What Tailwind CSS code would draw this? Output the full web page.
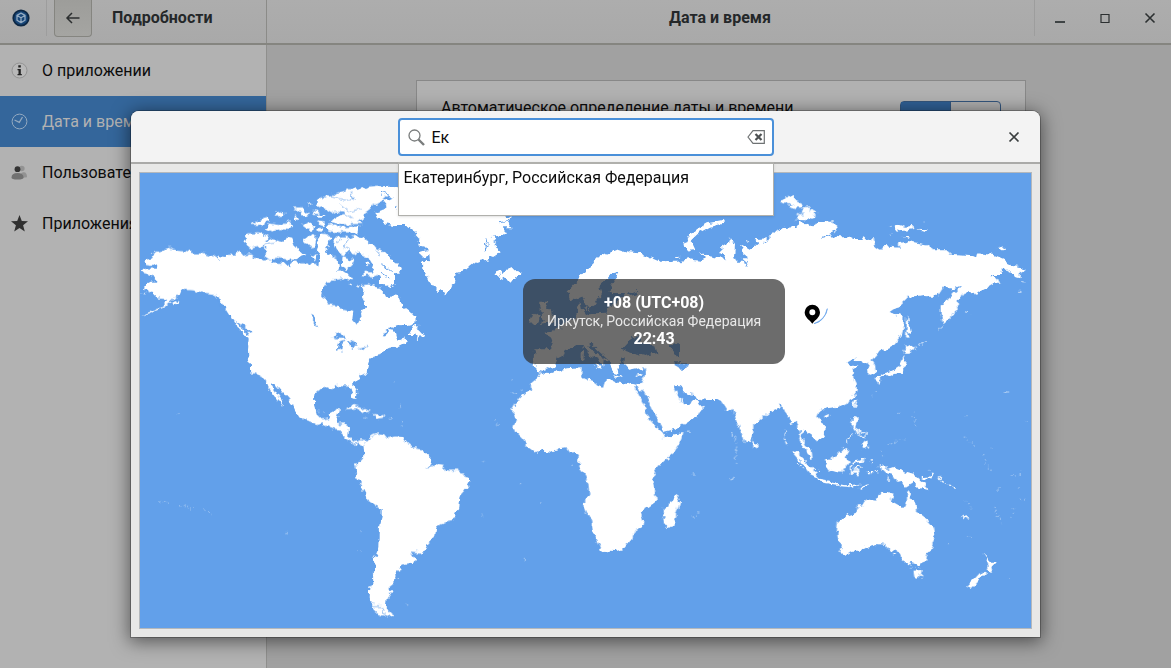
<!DOCTYPE html>
<html lang="ru">
<head>
  <meta charset="UTF-8" />
  <meta name="viewport" content="width=device-width, initial-scale=1.0" />
  <title>Дата и время</title>
  <script src="https://cdn.jsdelivr.net/npm/@tailwindcss/browser@4"></script>
</head>
<body class="bg-[#a1a1a1] font-[Roboto,sans-serif] text-base text-[#0c0c0c]">
  <div class="flex flex-col h-screen overflow-hidden">
    <!-- Title bar -->
    <header class="flex h-[45px] shrink-0 border-b-2 border-[#858580] bg-linear-to-b from-[#adadad] to-[#a9a9a9] text-[#242729]">
      <div class="flex w-[267px] h-full shrink-0 border-r border-[#8b8b88]">
        <div class="flex w-[47px] h-9 items-center pl-3 border-r border-[#9d9d9d]">
          <svg class="w-[18px] h-[18px]" viewBox="0 0 18 18" fill="none">
            <circle cx="9" cy="9" r="8.6" fill="#0d2744" />
            <circle cx="9" cy="9" r="6.8" fill="#174577" />
            <path d="M9 4.2 13 6.3v5L9 13.6 5 11.3v-5zM5 6.5l4 2.2 4-2.2M9 8.7v4.7" stroke="#94abc2" stroke-width="1.3" stroke-linejoin="round" />
          </svg>
        </div>
        <button aria-label="Назад" class="ml-[7px] flex w-[38px] h-[37px] items-center justify-center rounded-b border border-t-0 border-[#858580] bg-linear-to-b from-[#9d9d9a] to-[#a5a5a2]">
          <svg class="w-4 h-4" viewBox="0 0 16 16" fill="none" stroke="#2c2f30" stroke-width="1.5"><path d="M14.500 8H2.500M7 3 2 8l5 5" /></svg>
        </button>
        <h2 class="flex h-9 items-center pl-5 font-bold">Подробности</h2>
      </div>
      <h1 class="flex flex-1 h-9 items-center justify-center pl-[139px] font-bold">Дата и время</h1>
      <div class="flex w-[137px] h-9 shrink-0 items-center gap-[25px] border-l border-[#9d9d9d] pl-[15px]">
        <button aria-label="Свернуть" class="flex size-5 items-center justify-center"><svg class="w-3 h-3" viewBox="0 0 12 12"><path d="M1 9h10v2H1z" fill="#3f4445" /></svg></button>
        <button aria-label="Развернуть" class="flex size-5 items-center justify-center"><svg class="w-3 h-3" viewBox="0 0 12 12"><path d="M2 2.500h8v8H2z" fill="none" stroke="#2c3031" stroke-width="1.200" /></svg></button>
        <button aria-label="Закрыть" class="flex size-5 items-center justify-center"><svg class="w-3 h-3" viewBox="0 0 12 12"><path d="m1.500 1.500 9 9m0-9-9 9" fill="none" stroke="#2c3031" stroke-width="1.600" /></svg></button>
      </div>
    </header>

    <div class="flex flex-1">
      <!-- Sidebar -->
      <nav class="w-[267px] shrink-0 border-r border-[#8f8f8d] bg-[#b2b2b2]">
        <a href="#" class="flex h-[51px] items-center gap-[14px] pl-[11px]">
          <svg class="w-[17px] h-[17px]" viewBox="0 0 17 17"><circle cx="8.500" cy="8.500" r="7.500" fill="#b8b8b8" stroke="#8a8a8a" stroke-width=".8" /><path d="M7.300 3.300h2.500v2.200H7.300zM6.500 7h3.300v5h1v1.300H6.500V12h1V8.300h-1z" fill="#222" /></svg>
          О приложении
        </a>
        <a href="#" class="flex h-[51px] items-center gap-[14px] bg-[#34669b] pl-[11px] text-[#b2b2b2]">
          <svg class="w-[17px] h-[17px]" viewBox="0 0 17 17" fill="none" stroke="#93a9c0"><circle cx="8.500" cy="8.500" r="7.400" /><path d="M3.500 7 8.300 9.300 11.500 4" stroke-width="1.300" /></svg>
          Дата и время
        </a>
        <a href="#" class="flex h-[51px] items-center gap-[14px] pl-[11px]">
          <svg class="w-[17px] h-[17px]" viewBox="0 0 17 17"><circle cx="10.800" cy="4.500" r="2.800" fill="#929292" /><path d="M9 14c0-5 2-5.800 4-5.800s3 2 3 5z" fill="#929292" /><circle cx="6.500" cy="5.200" r="2.900" fill="#333" /><path d="M.5 13.500c0-3 2-4.500 6-4.500s6 1.500 6 4.500c0 1.500-2 2-6 2s-6-.5-6-2z" fill="#717171" /></svg>
          Пользователи
        </a>
        <a href="#" class="flex h-[51px] items-center gap-[14px] pl-[11px]">
          <svg class="w-[17px] h-[17px]" viewBox="0 0 17 17"><path d="m8.500 0 2.300 6 6.200.3-4.900 3.900 1.700 6.300-5.300-3.600-5.300 3.600 1.700-6.300L0 6.300 6.200 6z" fill="#303030" /></svg>
          Приложения
        </a>
      </nav>

      <!-- Page behind the dialog -->
      <main class="flex-1 pl-1 pt-[35px]">
        <div class="mx-auto flex max-w-[610px] h-40 items-start justify-between border border-[#888] bg-[#b1b1b1] px-6 pt-[15px]">
          <label for="auto-time">Автоматическое определение даты и времени</label>
          <div class="relative mt-[5px] flex w-[101px] h-[34px] rounded border border-[#33557d] bg-[#adadad]">
            <input id="auto-time" type="checkbox" checked class="absolute inset-0 appearance-none" />
            <span class="w-1/2 border-r border-[#33557d] bg-[#2f5f94]"></span>
          </div>
        </div>
      </main>
    </div>
  </div>

  <!-- Time zone dialog -->
  <div class="fixed inset-0 flex px-[131px] pt-[111px] pb-[31px]">
    <div role="dialog" aria-label="Часовой пояс" class="flex flex-1 flex-col rounded-t-lg bg-[#e8e8e7] shadow-[0_0_0_1px_rgba(0,0,0,0.25),0_3px_18px_2px_rgba(0,0,0,0.5)]">
      <div class="grid grid-cols-[1fr_376px_1fr] h-[53px] shrink-0 items-start rounded-t-lg border-b-2 border-[#aaaaa8] bg-[#f3f3f3] pt-[7px]">
        <div class="relative col-start-2">
          <svg class="absolute left-[10px] top-[11px] w-[17px] h-[17px]" viewBox="0 0 17 17" fill="none"><circle cx="6.500" cy="6.500" r="5.500" stroke="#7a7d7d" stroke-width="1.300" /><path d="m10.500 10.500 5.500 5.500" stroke="#7a7d7d" stroke-width="2.400" /></svg>
          <input type="text" aria-label="Поиск города" value="Ек" class="block w-full h-[38px] rounded-[4px] border-2 border-[#4a90d9] bg-white pl-8 pr-9 outline-none" />
          <button aria-label="Очистить" class="absolute right-[9px] top-[11px]">
            <svg class="w-[18px] h-4" viewBox="0 0 18 16" fill="none" stroke="#6e7273"><path d="M1 8 6 1.700h11.300v12.600H6z" stroke-width="1.200" /><path d="m8.500 5 6 6m0-6-6 6" stroke="#4d5152" stroke-width="2.200" /></svg>
          </button>
          <!-- Completion popup -->
          <ul class="absolute left-0 top-[44px] z-10 w-full h-[54px] border border-[#b0b0ac] border-t-2 bg-white px-[5px] shadow-sm">
            <li><a href="#" class="block leading-7">Екатеринбург, Российская Федерация</a></li>
          </ul>
        </div>
        <div class="flex justify-end pr-4 pt-[9px]">
          <button aria-label="Закрыть" class="flex size-5 items-center justify-center"><svg class="w-3 h-3" viewBox="0 0 12 12"><path d="m1.500 1.500 9 9m0-9-9 9" fill="none" stroke="#3a3e3f" stroke-width="1.700" /></svg></button>
        </div>
      </div>

      <div class="relative m-2 min-h-0 flex-1 border border-[#b4b8bc] bg-[#62a0ea]">
        <svg class="block w-full h-full" viewBox="420 519 2673 1365" preserveAspectRatio="xMidYMid slice" fill="#fff">
          <defs>
            <!-- breaks up the straight segments of the coastlines -->
            <filter id="coast" x="420" y="519" width="2673" height="1365" filterUnits="userSpaceOnUse" color-interpolation-filters="sRGB">
              <feTurbulence type="fractalNoise" baseFrequency=".055" numOctaves="2" seed="4" result="noise" />
              <feDisplacementMap in="SourceGraphic" in2="noise" scale="22" xChannelSelector="R" yChannelSelector="G" />
            </filter>
          </defs>
          <g filter="url(#coast)">
          <!-- Alaska, Canada and the arctic islands -->
          <g transform="translate(405 495)">
            <path d="M28 285 45 280 52 268 68 260 85 258 100 248 120 256 150 260 175 265 200 265 225 272 235 278 252 283 255 272 270 277 280 270 300 268 315 260 325 272 345 268 365 278 385 283 410 282 405 293 425 297 460 296 465 307 470 292 485 288 500 295 530 295 550 298 554 275 545 258 552 243 548 220 556 208 588 212 580 235 572 246 580 262 575 270 590 272 605 280 607 298 615 303 609 316 628 316 632 325 655 340 645 348 625 340 605 345 600 338 590 350 578 350 565 370 558 395 572 402 580 418 605 422 620 433 640 438 655 440 652 462 665 478 678 470 675 443 690 430 690 410 680 400 685 375 680 362 700 358 720 363 740 375 750 395 765 402 780 385V487L755 495 735 520 760 510 780 512V545L745 550 735 565 715 570 700 590 695 625H345V600L340 575 342 520 325 503 305 483 285 450 265 425 255 400 235 390 200 385 175 376 150 375 135 374 130 387 118 400 90 425 60 440 22 455 40 443 75 428 100 405 90 402 65 400 60 385 35 380 30 365 45 350 65 350 50 330 18 322 25 315 45 310 70 312 65 302 35 297Z" />
            <path d="M545 105 570 95 585 98 600 85 650 72 665 75 700 65 730 62 780 70V100L760 92 740 110 710 125 705 135 685 150 690 160 670 168 680 177 620 178 575 168 600 165 605 155 630 150 628 142 600 140 590 145 565 130 545 118ZM578 182 600 178 620 187 670 184 668 202 610 202 580 197ZM328 235 340 205 370 205 405 215 385 228 400 230 375 245 350 250 335 243ZM382 238 405 222 440 230 460 218 475 222 482 240 495 262 512 268 480 285 455 283 430 278 405 282 388 270 400 258ZM350 180 380 160 402 155 405 165 380 180ZM390 190 400 175 420 178 445 182 455 165 475 185 460 195 435 192 410 203 390 193ZM418 155 425 142 447 138 448 152ZM478 130 505 130 525 148 510 153ZM480 150 490 165 478 163ZM500 182 515 170 537 180 535 195 515 193ZM532 138 548 140 555 150 540 150ZM505 225 520 212 545 215 540 245 522 247 515 235ZM528 270 545 272 540 290ZM720 145 745 130 780 105V180L760 170 730 160ZM548 152H575L570 158H550ZM545 165 565 170 570 185 555 180ZM518 115 528 120 522 122ZM547 188 565 190 560 200 548 198Z" />
            <path d="M595 230 610 215 628 214 645 220 660 212 690 220 695 232 715 238 725 250 755 265 765 288 750 292 770 312 780 318V358L755 345 740 345 728 330 715 335 685 330 690 320 710 322 720 305 705 285 700 275 680 270 670 262 655 268 640 260 628 268 605 258ZM620 270 640 275 655 290 650 303 630 312 618 300ZM690 290 700 290 702 300 690 299ZM112 412 130 405 128 415 115 420ZM22 383 32 385 26 388ZM640 355 652 357 648 362ZM662 362 675 360 670 368Z" />
            <g fill="#62a0ea">
              <path d="M525 452 535 450 540 465 547 485 541 480 530 465ZM580 520 596 512 608 502 622 505 635 522 618 518 595 522ZM613 532 632 527 628 533 620 542 619 562 612 567 609 548ZM638 528 650 528 664 532 668 541 655 542 657 552 648 548 646 536ZM642 569 655 561 674 560 672 565 655 570ZM670 550 695 543 690 550 676 554ZM245 400 270 425 285 450 277 452 262 430ZM300 465 350 505 345 510 315 485Z" />
              <path d="M585 95 630 105 660 98M615 120 645 140 680 130M628 150 650 158M648 85 655 110M380 240 420 235M640 222 630 245 640 258M606 230 618 222M722 255 755 292" fill="none" stroke="#62a0ea" stroke-width="2" />
            </g>
            <path d="m255 400 18 25 15 22 15 20M280 425l8 30" fill="none" stroke="#fff" stroke-width="3" stroke-dasharray="9 3" />
          </g>

          <!-- Greenland, Labrador, Iceland -->
          <g transform="translate(1140 495)">
            <path d="M0 65 25 62 60 70V30H380L370 150 395 160 384 172 398 190 370 190 380 205 358 212 335 215 352 228 340 240 364 260 330 282 290 290 265 310 245 320 228 325 222 355 212 362 205 385 195 388 188 375 170 378 150 352 130 312 128 290 150 292 148 265 125 275 118 262 140 255 135 245 115 240 118 222 105 208 100 192 85 180 40 180 15 175 0 165 12 160 0 150 45 138 50 125 30 135 0 100 20 105 48 92 30 90Z" />
            <path d="M345 318 360 312 366 328 375 318 400 313 415 312 425 327 405 342 385 347 360 338 362 330 348 328ZM0 355V262L25 268 20 282 45 290 63 310 60 322 45 325 45 345 35 370 20 360ZM0 375 15 403 30 400 45 385 60 400 70 425 90 440 108 460 105 475 85 480 60 480 40 485 0 500ZM0 512 20 510 25 498 45 500 50 518 65 530 75 515 80 530 50 545 35 545 20 548 0 565ZM86 510 102 480 115 476 110 495 118 492 133 508 130 522 122 515 112 522 105 510Z" />
            <path d="m0 82 32 10M0 115l22-12M315 220l5 40M325 235l-10 28M345 225l12 25M0 320l28 18M10 300l25 20M460 254h6M360 170l28-4" fill="none" stroke="#62a0ea" stroke-width="3" />
          </g>

          <!-- Central and South America -->
          <g transform="translate(720 1020)">
            <path d="M27-20 24 30 28 62 40 80 50 102 75 115 85 142 98 165 112 175 132 197 128 180 112 158 93 130 105 130 125 155 145 178 160 197 165 220 185 235 230 252 245 247 255 257 270 265 300 272 310 290 325 300 350 315 355 305 370 315 375 300 360 298 340 305 325 290 327 258 315 250 290 252 292 235 300 210 280 210 270 232 245 235 230 220 222 195 223 162 245 145 262 142 280 147 290 138 325 140 335 155 340 172 350 179 352 160 342 130 355 115 380 98 382 82 378 65 392 58 400 48 425 40 430 25 455 10V-10H385V30H290V-10Z" />
            <path d="M370 310 385 295 400 285 415 280 432 282 442 294 465 290 490 292 500 308 520 325 545 328 562 340 577 362 565 380 585 372 615 380 622 392 650 392 670 405 685 410 688 430 675 450 658 468 655 505 640 540 615 545 590 560 585 590 565 610 558 627 543 638 512 635 525 655 518 670 485 677 480 692 465 692 470 710 458 728 445 738 458 750 440 775 437 800 450 818 462 825 445 832 415 822 400 808 395 790 386 770 388 740 400 735 398 700 405 690 402 660 415 625 417 560 425 530 425 508 385 480 365 440 345 410 352 395 348 375 373 348Z" />
            <path d="M318 205 340 195 360 200 392 215 370 217 350 205 322 207ZM405 222 425 224 438 232 410 236ZM367 234H380L378 238ZM448 233H458L456 237Z" />
            <path d="m455 22 25-18 20-4-25 15z" />
            <path d="M560 382l20-3M398 700v35M400 800h25l8 25M388 775l15 18" fill="none" stroke="#62a0ea" stroke-width="2" />
          </g>

          <!-- Europe -->
          <g transform="translate(1530 810)">
            <path d="M68 285 73 250 70 238 120 238 130 215 118 198 100 188 128 185 135 173 155 172 170 158 195 145 205 130 200 108 212 98 216 120 225 135 260 130 290 128 300 105 322 100 320 88 355 72 310 72 300 62 305 40 320 20 325 5 310 10 290 30 268 50 275 70 268 85 255 105 235 118 225 95 215 80 195 90 180 88 173 65 190 45 205 30 230 0 260-35 300-53 325-63 355-53 390-50 450-25H700V295H540L405 290 395 305 380 295 355 300 342 285 345 262 330 270 338 280 325 283 332 300 322 295 325 312 312 308 300 285 292 268 262 240 245 222 235 225 245 240 260 250 292 270 280 272 280 290 268 268 240 255 220 225 200 225 165 240 160 255 140 265 130 290 90 305Z" />
            <path d="M88 95 115 95 108 110 122 120 125 135 138 150 125 160 88 165 105 152 94 145 102 125 88 115ZM60 158 70 132 82 128 92 138 85 155ZM250 284 275 287 272 296ZM212 245 222 247 220 272 212 270ZM217 225 222 235 218 240ZM312 316 340 320 320 323ZM375 318 395 312 390 320ZM218 112 230 112 226 122Z" />
            <path d="M335 240 355 218 370 195 382 205 395 196 398 212 440 232 445 248 400 258 365 250ZM378 200 410 194 402 212ZM482 232 495 212 508 204 528 210 530 218 515 222 520 235 540 235 528 250 535 262 537 293 515 297 500 287 510 265 495 245ZM350 72 375 62 380 72 362 78ZM380 65 388 60 390 68Z" fill="#62a0ea" />
          </g>

          <!-- Russia and the northern coast -->
          <g transform="translate(1860 630)">
            <path d="M50 130 70 145 100 152 113 168 105 182 80 182 50 168 75 195 95 202 110 190 132 178 128 155 150 152 145 165 175 155 205 148 240 152 255 145 240 125 262 138 300 145 320 155 305 130 303 105 325 98 330 82 345 105 342 140 350 160 325 175 345 177 358 160 385 162 365 145 385 145 360 125 368 115 360 98 395 118 415 100 405 88 445 85 455 70 490 55 530 50 540 35 570 48 600 30 640 40 650 60 600 85 660 85V550H240L180 520V400H60Z" />
            <path d="M190 105 208 75 235 55 260 40 310 30 315 40 270 50 235 70 212 92 225 120 210 122ZM162 142 178 140 175 147ZM378 90 388 95 380 98Z" />
            <path d="m378 170 8-22M395 92l6 18M430 100l15-12" fill="none" stroke="#62a0ea" stroke-width="3" />
          </g>
          <path d="m2342 602 12-4 5-9 18-2 10 14 17 8 2 12-18 3-18-10-26-6zM2402 636l6-14 20-3 12 14 12 5-22 8-22-4zM2388 652l12-10 34-2 14 10-24 14-36-4zM2333 588l6-2z" />

          <!-- Far East, Kamchatka, Japan -->
          <g transform="translate(2460 540)">
            <path d="M-10 178 30 168 60 172 85 172 100 180 125 180 128 168 145 178 162 174 165 200 180 210 190 198 240 203 240 190 265 183 290 188 318 193 340 208 385 208 395 225 450 228 470 238 475 220 520 225 550 238 580 258 605 262 617 270 600 278 598 292 580 285 565 272 545 272 545 285 515 285 530 295 538 312 520 310 490 328 470 342 462 335 430 338 425 350 413 360 415 385 402 390 400 402 385 420 370 433 362 405 362 380 375 365 400 345 425 318 395 332 390 322 372 322 350 350 325 350 320 345 265 350 235 380 210 397 240 405 250 415 252 440 245 465 215 500 190 512 182 508 170 525 155 540 165 555 167 578 145 585 148 560 140 550 125 540 103 545 110 532 80 548 98 557 115 558 95 570 95 580 105 605 108 635 85 670H-10ZM0 128 40 124 50 140 25 165-10 172Z" />
            <path d="M262 402 268 430 275 455 264 460 268 477 258 475 260 440ZM258 488 268 502 286 507 265 518 248 518 258 505ZM250 525 258 540 255 555 250 577 225 582 205 590 195 582 180 595 185 602 175 612 170 594 190 580 215 573 235 560 245 545ZM222 140 235 134 255 140 278 138 280 148 240 154 225 150ZM291 146 322 148 320 155ZM248 168H268V175ZM532 206 545 199 560 205 540 209ZM603 300 622 304 610 304Z" />
            <path d="m278 505 14-8m8-3 20-10m35-35 14-12M435 395l14 3M594 337h7M308 126h5M210 142h5M212 165h5M552 633h12M0 160l35 4" fill="none" stroke="#fff" stroke-width="3" stroke-opacity=".7" />
          </g>

          <!-- Africa, Arabia, Madagascar -->
          <g transform="translate(1500 1050)">
            <path d="M122 65 135 71 150 72 165 65 200 55 245 52 243 82 265 92 290 100 300 108 312 110 318 90 335 88 355 98 385 102 398 98 410 102 405 112 418 138 432 165 440 195 460 222 485 245 492 262 520 257 547 252 543 272 520 310 490 335 465 365 455 385 465 420 467 455 440 475 422 490 430 510 428 528 408 537 400 565 375 595 350 603 325 602 310 610 300 600 303 590 280 550 272 510 255 475 253 460 268 430 265 400 255 375 235 350 240 312 230 306 210 308 200 292 180 295 150 305 130 302 110 308 85 290 65 265 45 245 40 232 48 210 38 180 55 150 75 130 92 118 95 98 115 82Z" />
            <path d="M435 40V75L425 102 410 104 420 128 430 118 450 155 460 185 480 215 490 245 525 237 550 225 590 200 610 172 595 155 583 142 570 158 550 158 545 145 540 153 525 110 540 110 555 130 585 140 600 148 660 150 675 165 695 163 715 235 740 150V30H480Z" />
            <path d="M532 432 540 455 530 490 520 525 505 535 490 525 487 505 495 490 493 470 515 455ZM560 245H570L565 250Z" />
            <path d="M525 40h42l-5 14-20 2-12-7zM412 115l8 12-2 6zM524 110l14-3 18 24 30 5 5 12-20 10-22 2-4-16-6 6z" fill="#62a0ea" />
            <path d="M38 126h6m5 4h6m8-7 5-4M40 88v5M58 401h5M122 462h5M216 338v5M575 375h6M575 498h6m8-6h6M72 628h6M697 250v8m4 6v8m6 18v15m3 12v12M696 385h6" stroke="#fff" stroke-width="3" stroke-opacity=".5" />
          </g>

          <!-- South Asia, Indonesia, Australia -->
          <g transform="translate(2130 1110)">
            <path d="M-10-10V90H30L50 120 65 124 76 113 85 155 95 185 108 220 120 215 130 185 130 165 150 152 180 125 208 115 208 103 220 110 225 122 236 135 240 160 257 152 265 175 270 190 268 210 280 228 300 262 308 271 305 240 285 225 274 205 280 180 300 190 318 215 345 200 347 180 335 155 322 140 330 122 350 118 375 115 410 100 430 75 440 60 440 40 430 20 422 10 430-10Z" />
            <path d="M343 135 358 128 352 143 344 143ZM432 93 441 92 433 112 427 104ZM130 208 143 225 140 235 130 236ZM241 240 257 243 285 270 310 298 322 306 322 323 300 312 280 285 265 268ZM320 325 350 330 385 340 385 345 350 340 322 333ZM345 268 360 270 385 252 405 230 418 242 408 262 416 274 403 292 396 308 360 303 350 290ZM428 142 442 142 443 160 435 175 447 183 438 188 427 172ZM455 225 472 208 474 232 460 238ZM505 290 525 285 535 300 555 293 580 302 612 312 632 330 655 358 630 352 610 338 590 350 575 338 558 342 560 330 550 315 530 310 520 300ZM380 455 400 440 435 430 445 408 455 410 470 388 495 392 505 375 525 367 550 375 542 392 565 405 582 412 588 390 588 370 595 360 605 388 615 395 622 425 640 435 655 455 672 475 676 500 665 530 650 560 648 574 622 584 605 578 600 584 580 575 570 560 558 538 545 548 525 525 500 522 470 530 450 542 425 542 410 552 390 545 396 535 385 500 386 485 378 480ZM610 602 635 600 632 618 622 627 613 620ZM820 549 833 565 840 575 860 575 850 590 838 606 830 600 836 585ZM816 602 828 608 800 640 785 655 771 648 795 625Z" />
            <g fill="none" stroke="#fff" stroke-width="5">
              <path d="M425 282l10-6 28-4M425 285v35l8-20 12 22-8-30 14-2M635 324l25-2 10-10M452 358l12-10 12-3M388 346l22 2 40-3M418 350l14 5M755 434l18 14M476 0l3 10 16-4 2-6" />
              <path d="M448 180l18 10-3 14-14-6z" stroke-width="3" />
              <path d="M228 182l-6 10 2 18 8 20M260 275l25 28M408 218l18-22M484 265l6 24M472 305h35M325 298l10 5M532 322l4 10M685 322l20 15 30 18M550 555l10-5" stroke-width="4" stroke-dasharray="8 5" />
            </g>
            <path d="M611 125l6 50M68 190l12 28v70M64 328l8-6M530 225l52-15M762 200l32 30M820 255l8 28 20 20M905 315h30v-10M855 410l20 50M910 415l-5 28M770 390l12 25M655 300l15 10M775 502h8M713 524h6M565 124h7M882 64h10M768 137h6M945 154h5M840 237h12M925 350l8 5M600 592h35M895 628h5M486 78l12-14M515 240l6 20M865 357h8M930 388h20" fill="none" stroke="#fff" stroke-width="4" stroke-opacity=".4" stroke-dasharray="4 9" />
          </g>
          <path d="M954 1234h6m10 2h8M1183 1144h6M1202 1215v8M1207 1265v15M1479 1265h6m4 8h5M1075 1590h8M1068 1650h14M856 1598h6M1448 1384h5M1445 1544h8M1220 1812h12M480 1500l30 12m30 2 40 14m30 0 25 15M530 1245h8" stroke="#fff" stroke-width="3" stroke-opacity=".45" stroke-dasharray="5 7" />
          </g>

          <!-- Lake Baikal and the selected location -->
          <path d="M2482 926q-3 30-40 45 30-5 40-45z" fill="#62a0ea" stroke="#62a0ea" stroke-width="2" />
          <path d="M2437 914a23 23 0 0 1 23 23c0 16-14 22-23 34-9-12-23-18-23-34a23 23 0 0 1 23-23zm0 14a9 9 0 1 0 0 18 9 9 0 0 0 0-18z" fill="#000" fill-rule="evenodd" />
        </svg>

        <!-- Location bubble -->
        <div class="absolute left-[43%] top-[106px] flex w-[262px] h-[85px] flex-col items-center justify-center rounded-xl bg-[#2d2d2d]/70 pb-[2px] text-white">
          <strong class="leading-[18px]">+08 (UTC+08)</strong>
          <span class="text-[14px] leading-[18px] text-[#e8e8e8]">Иркутск, Российская Федерация</span>
          <strong class="leading-[18px]">22:43</strong>
        </div>
      </div>
    </div>
  </div>
</body>
</html>
